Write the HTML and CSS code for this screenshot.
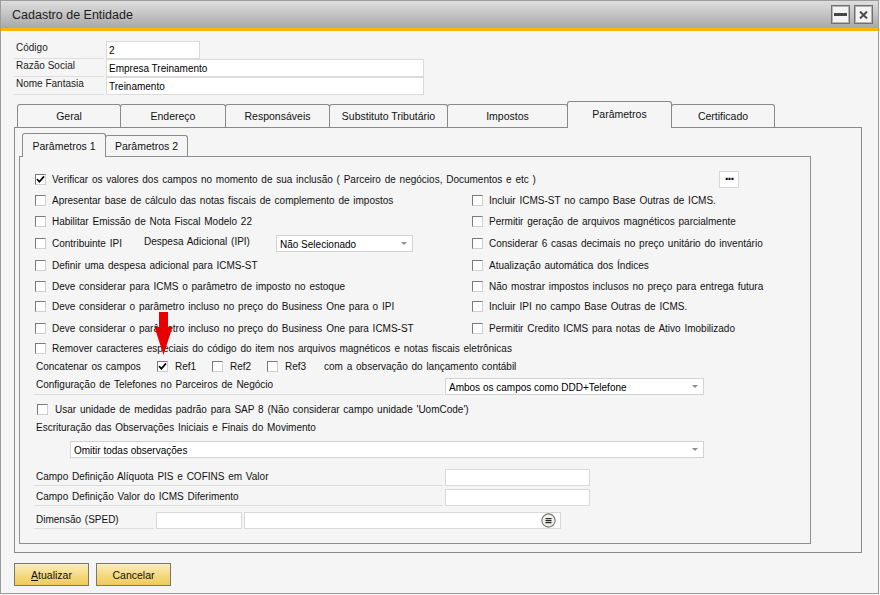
FILE: index.html
```html
<!DOCTYPE html>
<html lang="pt-BR">
<head>
<meta charset="utf-8">
<title>Cadastro de Entidade</title>
<link rel="stylesheet" href="styles.css">
</head>
<body>
<div class="window">
  <div class="titlebar">
    <span class="title">Cadastro de Entidade</span>
    <div class="wbtns">
      <span class="wbtn"><svg width="13" height="3" viewBox="0 0 13 3"><rect width="13" height="3" fill="#454545"/></svg></span>
      <span class="wbtn"><svg width="9" height="8" viewBox="0 0 9 8"><path d="M1 0.6 L8 7.4 M8 0.6 L1 7.4" stroke="#4a4a4a" stroke-width="2.1" fill="none"/></svg></span>
    </div>
  </div>

  <div class="content">
    <div class="head">
      <div class="hlabel">Código</div><div class="hinput short">2</div>
      <div class="hlabel">Razão Social</div><div class="hinput long">Empresa Treinamento</div>
      <div class="hlabel">Nome Fantasia</div><div class="hinput long">Treinamento</div>
    </div>

    <div class="tabs">
      <div class="tab w104">Geral</div>
      <div class="tab w106">Endereço</div>
      <div class="tab w105">Responsáveis</div>
      <div class="tab w119">Substituto Tributário</div>
      <div class="tab w121">Impostos</div>
      <div class="tab active w105">Parâmetros</div>
      <div class="tab w104">Certificado</div>
    </div>

    <div class="panel">
      <div class="subtabs">
        <div class="subtab active w84">Parâmetros 1</div>
        <div class="subtab w83">Parâmetros 2</div>
      </div>
      <div class="subpanel">
        <div class="row r1">
          <span class="cb"><svg width="9" height="9" viewBox="0 0 9 9"><path d="M1 4.2 L3.4 6.8 L8 1.4" stroke="#000" stroke-width="1.7" fill="none"/></svg></span>
          <span class="txt">Verificar os valores dos campos no momento de sua inclusão ( Parceiro de negócios, Documentos e etc )</span>
          <span class="dots">...</span>
        </div>

        <div class="grid2">
          <div class="cbi"><span class="cb"></span><span>Apresentar base de cálculo das notas fiscais de complemento de impostos</span></div>
          <div class="cbi"><span class="cb"></span><span>Incluir ICMS-ST no campo Base Outras de ICMS.</span></div>

          <div class="cbi"><span class="cb"></span><span>Habilitar Emissão de Nota Fiscal Modelo 22</span></div>
          <div class="cbi"><span class="cb"></span><span>Permitir geração de arquivos magnéticos parcialmente</span></div>

          <div class="cbi"><span class="cb"></span><span class="ipi-t">Contribuinte IPI</span><span class="ipi-l">Despesa Adicional (IPI)</span><span class="select s-ipi">Não Selecionado<i class="arr"></i></span></div>
          <div class="cbi"><span class="cb"></span><span>Considerar 6 casas decimais no preço unitário do inventário</span></div>

          <div class="cbi"><span class="cb"></span><span>Definir uma despesa adicional para ICMS-ST</span></div>
          <div class="cbi"><span class="cb"></span><span>Atualização automática dos Índices</span></div>

          <div class="cbi"><span class="cb"></span><span>Deve considerar para ICMS o parâmetro de imposto no estoque</span></div>
          <div class="cbi"><span class="cb"></span><span>Não mostrar impostos inclusos no preço para entrega futura</span></div>

          <div class="cbi"><span class="cb"></span><span>Deve considerar o parâmetro incluso no preço do Business One para o IPI</span></div>
          <div class="cbi"><span class="cb"></span><span>Incluir IPI no campo Base Outras de ICMS.</span></div>

          <div class="cbi"><span class="cb"></span><span>Deve considerar o parâmetro incluso no preço do Business One para ICMS-ST</span></div>
          <div class="cbi"><span class="cb"></span><span>Permitir Credito ICMS para notas de Ativo Imobilizado</span></div>
        </div>

        <div class="row r-rem">
          <div class="cbi"><span class="cb"></span><span>Remover caracteres especiais do código do item nos arquivos magnéticos e notas fiscais eletrônicas</span></div>
        </div>

        <div class="row r-conc">
          <span class="lbl conc-l">Concatenar os campos</span>
          <span class="ref w55"><span class="cb"><svg width="9" height="9" viewBox="0 0 9 9"><path d="M1 4.2 L3.4 6.8 L8 1.4" stroke="#000" stroke-width="1.7" fill="none"/></svg></span>Ref1</span>
          <span class="ref w55"><span class="cb"></span>Ref2</span>
          <span class="ref w57"><span class="cb"></span>Ref3</span>
          <span class="txt">com a observação do lançamento contábil</span>
        </div>

        <div class="row r-tel">
          <span class="lbl uline l409">Configuração de Telefones no Parceiros de Negócio</span>
          <span class="select s-tel">Ambos os campos como DDD+Telefone<i class="arr"></i></span>
        </div>

        <div class="row r-uom">
          <div class="cbi gap7"><span class="cb"></span><span>Usar unidade de medidas padrão para SAP 8 (Não considerar campo unidade 'UomCode')</span></div>
        </div>

        <div class="row r-esc">
          <span class="lbl">Escrituração das Observações Iniciais e Finais do Movimento</span>
        </div>

        <div class="row r-omit">
          <span class="select s-omit">Omitir todas observações<i class="arr"></i></span>
        </div>

        <div class="row r-f1">
          <span class="lbl uline l409">Campo Definição Alíquota PIS e COFINS em Valor</span>
          <span class="field f145"></span>
        </div>

        <div class="row r-f2">
          <span class="lbl uline l409">Campo Definição Valor do ICMS Diferimento</span>
          <span class="field f145"></span>
        </div>

        <div class="row r-dim">
          <span class="lbl uline l120">Dimensão (SPED)</span>
          <span class="field f86"></span>
          <span class="field f317">
            <svg class="listico" width="15" height="15" viewBox="0 0 15 15"><circle cx="7.5" cy="7.5" r="6.6" fill="#f1f1ec" stroke="#77776f" stroke-width="1.1"/><path d="M4.5 5.6 H10.5 M4.5 7.6 H10.5 M4.5 9.6 H10.5" stroke="#2a2a2a" stroke-width="1.1"/></svg>
          </span>
        </div>
      </div>
    </div>

    <div class="actions">
      <span class="btn"><u>A</u>tualizar</span>
      <span class="btn">Cancelar</span>
    </div>
  </div>

  <svg class="arrow" width="26" height="48" viewBox="0 0 26 48"><rect x="9" y="2" width="9" height="17" fill="#e60000"/><polygon points="4.5,17 22.5,17 13.5,45" fill="#e60000"/></svg>
</div>
</body>
</html>
```

FILE: styles.css
```css
* { box-sizing: border-box; }
html, body { margin: 0; padding: 0; }
body {
  width: 880px;
  height: 595px;
  overflow: hidden;
  background: #f5f5f5;
  font-family: "Liberation Sans", Arial, sans-serif;
  font-size: 10px;
  color: #111;
}
.window {
  position: relative;
  width: 879px;
  height: 594px;
  border: 1px solid #9c9c9c;
  background: #f5f5f5;
}
.titlebar {
  height: 30px;
  border-bottom: 3px solid #f5b700;
  background: linear-gradient(#dedede, #a8a8a8);
  display: flex;
  align-items: center;
  padding: 0 5px 0 11px;
}
.title { font-size: 12.5px; color: #1c1c1c; flex: 1; }
.wbtns { display: flex; gap: 4px; }
.wbtn {
  width: 19px;
  height: 19px;
  background: #f3f3f3;
  border: 1px solid #6f6f6f;
  box-shadow: inset 0 0 0 1px #b4b4b4;
  display: flex;
  align-items: center;
  justify-content: center;
}

.content { padding: 10px 13px 0 13px; }

.head {
  display: grid;
  grid-template-columns: 90px auto;
  grid-auto-rows: 18px;
  column-gap: 2px;
  justify-items: start;
}
.hlabel {
  width: 90px;
  border-bottom: 1px solid #dedede;
  padding: 1px 0 0 2px;
  line-height: 12px;
  color: #222;
}
.hinput {
  height: 18px;
  background: #fff;
  border: 1px solid #dadada;
  padding: 3px 0 0 2px;
  line-height: 12px;
  color: #000;
}
.short { width: 94px; }
.long { width: 318px; }

.tabs {
  display: flex;
  align-items: flex-end;
  height: 26px;
  margin-top: 6px;
  padding-left: 3px;
}
.tab {
  height: 23px;
  border: 1px solid #8a8a8a;
  border-bottom: none;
  border-radius: 3px 3px 0 0;
  background: #f5f5f5;
  display: flex;
  align-items: center;
  justify-content: center;
  font-size: 10.5px;
  color: #111;
  margin-left: -1px;
}
.tab:first-child { margin-left: 0; }
.tab.active {
  height: 27px;
  margin-bottom: -1px;
  position: relative;
  z-index: 1;
  padding-bottom: 2px;
}
.w104 { width: 104px; }
.w105 { width: 105px; }
.w106 { width: 106px; }
.w119 { width: 119px; }
.w121 { width: 121px; }
.w84 { width: 84px; }
.w83 { width: 83px; }

.panel {
  width: 848px;
  height: 426px;
  border: 1px solid #8a8a8a;
  padding: 5px 0 0 4px;
}
.subtabs {
  display: flex;
  align-items: flex-end;
  height: 23px;
  padding-left: 3px;
}
.subtab {
  height: 21px;
  border: 1px solid #8a8a8a;
  border-bottom: none;
  border-radius: 3px 3px 0 0;
  background: #f5f5f5;
  display: flex;
  align-items: center;
  justify-content: center;
  font-size: 10.5px;
  margin-left: -1px;
}
.subtab:first-child { margin-left: 0; }
.subtab.active {
  height: 24px;
  margin-bottom: -1px;
  position: relative;
  z-index: 1;
  padding-top: 1px;
}
.subpanel {
  width: 792px;
  height: 388px;
  border: 1px solid #8f8f8f;
  padding: 13px 0 0 14px;
  word-spacing: 1px;
}

.row { display: flex; align-items: center; height: 18px; }
.txt { white-space: nowrap; }
.cb {
  width: 11px;
  height: 11px;
  flex: none;
  background: #fff;
  border: 1px solid;
  border-color: #7a7a7a #cfcfcf #cfcfcf #7a7a7a;
  display: flex;
  align-items: center;
  justify-content: center;
}
.r1 { width: 705px; padding-left: 1px; gap: 6px; }
.dots {
  margin-left: auto;
  width: 20px;
  height: 17px;
  background: #fff;
  border: 1px solid #d6d6d6;
  font-weight: bold;
  font-size: 14px;
  line-height: 7px;
  text-align: center;
  letter-spacing: -1px;
  word-spacing: 0;
  color: #000;
}

.grid2 {
  display: grid;
  grid-template-columns: 438px 1fr;
  grid-template-rows: 22px 21px 22px 22px 20px 21px 22px;
  margin-top: 1px;
  align-items: center;
}
.cbi {
  display: flex;
  align-items: center;
  gap: 6px;
  padding-left: 1px;
  white-space: nowrap;
}
.grid2 .cbi:nth-child(even) { padding-left: 0; }
.gap7 { gap: 7px; padding-left: 3px; }
.ipi-t { width: 86px; }
.ipi-l { width: 126px; position: relative; top: -2px; }

.select {
  position: relative;
  height: 17px;
  background: #fff;
  border: 1px solid #d2d2d2;
  padding: 3px 0 0 3px;
  line-height: 11px;
  white-space: nowrap;
  color: #000;
  flex: none;
  word-spacing: 0;
}
.arr {
  position: absolute;
  right: 5px;
  top: 6px;
  width: 0;
  height: 0;
  border-left: 3px solid transparent;
  border-right: 3px solid transparent;
  border-top: 3px solid #8c8c8c;
}
.s-ipi { width: 137px; }
.s-tel { width: 259px; align-self: flex-end; margin-left: 2px; }
.s-omit { width: 634px; margin-left: 36px; }

.lbl { padding-left: 2px; white-space: nowrap; flex: none; }
.uline { border-bottom: 1px solid #dcdcdc; align-self: stretch; display: flex; align-items: center; padding-bottom: 1px; }
.l409 { width: 409px; }
.l120 { width: 120px; }

.conc-l { width: 123px; }
.ref { display: flex; align-items: center; gap: 7px; flex: none; }
.w55 { width: 55px; }
.w57 { width: 57px; }

.r-tel { height: 19px; margin-top: 1px; }
.r-uom { margin-top: 5px; }
.r-omit { height: 17px; margin-top: 5px; }
.r-f1 { height: 17px; margin-top: 11px; }
.r-f2 { height: 17px; margin-top: 3px; }
.r-dim { height: 17px; margin-top: 6px; }

.field {
  height: 17px;
  background: #fff;
  border: 1px solid #d8d8d8;
  flex: none;
  margin-left: 2px;
  display: flex;
  align-items: center;
  justify-content: flex-end;
}
.f145 { width: 145px; }
.f86 { width: 86px; }
.f317 { width: 317px; padding-right: 4px; }

.actions { display: flex; gap: 7px; margin-top: 10px; }
.btn {
  width: 75px;
  height: 23px;
  border: 1px solid #777;
  background: linear-gradient(#fbeec0, #f4d77a 60%, #efcb5e);
  display: flex;
  align-items: center;
  justify-content: center;
  font-size: 10.5px;
  color: #111;
}
.btn u { text-decoration: underline; }

.arrow { position: absolute; left: 149px; top: 309px; }
```
